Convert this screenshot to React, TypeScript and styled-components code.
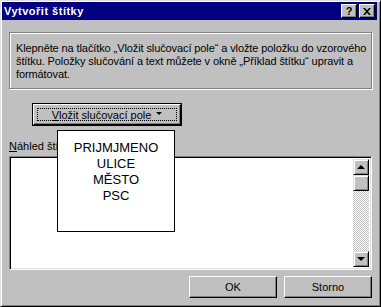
import React from 'react';
import styled, { createGlobalStyle } from 'styled-components';

const GlobalStyle = createGlobalStyle`
  html, body {
    margin: 0;
    padding: 0;
    background: #c0c0c0;
  }
  body {
    font-family: "Liberation Sans", Arial, sans-serif;
    font-size: 11px;
  }
`;

const Window = styled.div`
  box-sizing: border-box;
  width: 381px;
  height: 307px;
  display: flex;
  flex-direction: column;
  background: #c0c0c0;
  border-top: 1px solid #dfdfdf;
  border-left: 1px solid #dfdfdf;
  border-right: 1px solid #000;
  border-bottom: 1px solid #000;
  box-shadow: inset 1px 1px 0 #fff, inset -1px -1px 0 #808080;
  padding: 1px 3px 3px 1px;
  color: #000;
`;

const TitleBar = styled.div`
  height: 18px;
  display: flex;
  align-items: center;
  justify-content: space-between;
  background: #000080;
  padding: 0 2px 0 2px;
`;

const Title = styled.span`
  color: #fff;
  font-weight: bold;
  font-size: 11px;
  letter-spacing: 0.5px;
`;

const TitleButtons = styled.div`
  display: flex;
  gap: 2px;
`;

const TitleBtn = styled.div`
  box-sizing: border-box;
  width: 16px;
  height: 14px;
  display: flex;
  align-items: center;
  justify-content: center;
  background: #c0c0c0;
  border-top: 1px solid #fff;
  border-left: 1px solid #fff;
  border-right: 1px solid #000;
  border-bottom: 1px solid #000;
  box-shadow: inset -1px -1px 0 #808080;
  font-weight: bold;
  font-size: 11px;
  line-height: 1;
`;

const Body = styled.div`
  flex: 1;
  display: flex;
  flex-direction: column;
  padding: 12px 5px 0 7px;
`;

const GroupBox = styled.div`
  box-sizing: border-box;
  height: 57px;
  border: 1px solid #808080;
  box-shadow: inset 1px 1px 0 #fff, 1px 1px 0 #fff;
  padding: 9px 6px 0 6px;
  line-height: 13px;
  white-space: nowrap;
  letter-spacing: -0.1px;
`;

const ToolRow = styled.div`
  position: relative;
  margin: 14px 0 0 23px;
  width: 150px;
`;

const MergeButton = styled.div`
  box-sizing: border-box;
  width: 150px;
  height: 23px;
  border: 1px solid #000;
  background: #c0c0c0;
  display: flex;
`;

const Bevel = styled.div`
  flex: 1;
  display: flex;
  padding: 3px;
  border-top: 1px solid #fff;
  border-left: 1px solid #fff;
  border-right: 1px solid #000;
  border-bottom: 1px solid #000;
  box-shadow: inset -1px -1px 0 #808080;
`;

const FocusRect = styled.div`
  flex: 1;
  display: flex;
  align-items: center;
  justify-content: center;
  gap: 5px;
  outline: 1px dotted #000;
  outline-offset: -1px;
`;

const Caret = styled.span`
  width: 0;
  height: 0;
  border-left: 3px solid transparent;
  border-right: 3px solid transparent;
  border-top: 3px solid #000;
  margin-top: -3px;
`;

const Popup = styled.div`
  position: absolute;
  left: 25px;
  top: 27px;
  z-index: 2;
  box-sizing: border-box;
  width: 118px;
  height: 102px;
  background: #fff;
  border: 1px solid #000;
  padding-top: 9px;
  display: flex;
  flex-direction: column;
  align-items: center;
  font-size: 13px;
  line-height: 16px;
`;

const Label = styled.div`
  margin-top: 14px;
  line-height: 13px;
  margin-bottom: 3px;
`;

const Preview = styled.div`
  box-sizing: border-box;
  height: 114px;
  display: flex;
  justify-content: flex-end;
  background: #fff;
  border-top: 1px solid #808080;
  border-left: 1px solid #808080;
  border-right: 1px solid #fff;
  border-bottom: 1px solid #fff;
  box-shadow: inset 1px 1px 0 #000, inset -1px -1px 0 #dfdfdf;
  padding: 2px;
`;

const Scrollbar = styled.div`
  width: 16px;
  display: flex;
  flex-direction: column;
  background: conic-gradient(#fff 25%, #c0c0c0 0 50%, #fff 0 75%, #c0c0c0 0) 0 0 / 2px 2px;
`;

const ScrollPart = styled.div`
  box-sizing: border-box;
  width: 16px;
  height: 16px;
  display: flex;
  align-items: center;
  justify-content: center;
  background: #c0c0c0;
  border-top: 1px solid #dfdfdf;
  border-left: 1px solid #dfdfdf;
  border-right: 1px solid #000;
  border-bottom: 1px solid #000;
  box-shadow: inset 1px 1px 0 #fff, inset -1px -1px 0 #808080;
`;

const Track = styled.div`
  flex: 1;
`;

const Arrow = styled.span<{ $down?: boolean }>`
  width: 0;
  height: 0;
  border-left: 4px solid transparent;
  border-right: 4px solid transparent;
  ${(p) => (p.$down ? 'border-top: 4px solid #000;' : 'border-bottom: 4px solid #000;')}
`;

const ButtonRow = styled.div`
  display: flex;
  justify-content: flex-end;
  gap: 7px;
  margin-top: 6px;
`;

const PushButton = styled.div`
  box-sizing: border-box;
  width: 88px;
  height: 22px;
  display: flex;
  align-items: center;
  justify-content: center;
  background: #c0c0c0;
  border-top: 1px solid #fff;
  border-left: 1px solid #fff;
  border-right: 1px solid #000;
  border-bottom: 1px solid #000;
  box-shadow: inset -1px -1px 0 #808080;
`;

const fields = ['PRIJMJMENO', 'ULICE', 'MĚSTO', 'PSC'];

const App: React.FC = () => {
  return (
    <>
      <GlobalStyle />
      <Window>
        <TitleBar>
          <Title>Vytvořit štítky</Title>
          <TitleButtons>
            <TitleBtn>?</TitleBtn>
            <TitleBtn>
              <svg width="8" height="7" viewBox="0 0 8 7">
                <path d="M0 0h2l2 2.2L6 0h2L5 3.5 8 7H6L4 4.8 2 7H0l3-3.5z" fill="#000" />
              </svg>
            </TitleBtn>
          </TitleButtons>
        </TitleBar>
        <Body>
          <GroupBox>
            Klepněte na tlačítko „Vložit slučovací pole“ a vložte položku do vzorového
            <br />
            štítku. Položky slučování a text můžete v okně „Příklad štítku“ upravit a
            <br />
            formátovat.
          </GroupBox>
          <ToolRow>
            <MergeButton>
              <Bevel>
                <FocusRect>
                  <span>
                    <u>V</u>ložit slučovací pole
                  </span>
                  <Caret />
                </FocusRect>
              </Bevel>
            </MergeButton>
            <Popup>
              {fields.map((f) => (
                <div key={f}>{f}</div>
              ))}
            </Popup>
          </ToolRow>
          <Label>
            <u>N</u>áhled štítku
          </Label>
          <Preview>
            <Scrollbar>
              <ScrollPart>
                <Arrow />
              </ScrollPart>
              <ScrollPart />
              <Track />
              <ScrollPart>
                <Arrow $down />
              </ScrollPart>
            </Scrollbar>
          </Preview>
          <ButtonRow>
            <PushButton>OK</PushButton>
            <PushButton>Storno</PushButton>
          </ButtonRow>
        </Body>
      </Window>
    </>
  );
};

export default App;
